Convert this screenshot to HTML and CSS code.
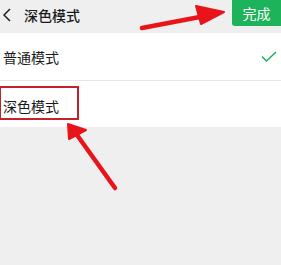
FILE: index.html
```html
<!DOCTYPE html>
<html lang="zh">
<head>
<meta charset="utf-8">
<link rel="stylesheet" href="styles.css">
</head>
<body>
<div class="page">
  <header class="header">
    <svg class="back" width="10" height="14" viewBox="0 0 10 14"><path d="M8 1 L2 7 L8 13" fill="none" stroke="#222" stroke-width="1.5"/></svg>
    <div class="title">深色模式</div>
    <div class="done">完成</div>
  </header>
  <div class="list">
    <div class="row row-first">
      <span class="label">普通模式</span>
      <svg class="check" width="16" height="12" viewBox="0 0 16 12"><path d="M1 5.5 L5.5 10 L15 1" fill="none" stroke="#1aad5a" stroke-width="1.4"/></svg>
    </div>
    <div class="row row-second">
      <span class="label">深色模式</span>
    </div>
  </div>
  <div class="mark-box"></div>
  <svg class="arrows" width="281" height="265" viewBox="0 0 281 265">
    <g fill="#e8141a" stroke="#e8141a" stroke-linecap="round" stroke-linejoin="round">
      <line x1="142" y1="28" x2="205" y2="16" stroke-width="4.5"/>
      <polygon points="224,12 196,6 201,24" stroke-width="2"/>
      <line x1="115" y1="188" x2="77" y2="135" stroke-width="4.5"/>
      <polygon points="68,124 69,139 86,130" stroke-width="2"/>
    </g>
  </svg>
</div>
</body>
</html>
```
FILE: styles.css
```css
html, body {
  margin: 0;
  padding: 0;
}
body {
  background: #efefef;
  font-family: "Noto Sans CJK SC", "Noto Sans", sans-serif;
  color: #1a1a1a;
}
.page {
  position: relative;
  width: 281px;
  height: 265px;
  overflow: hidden;
}
.header {
  display: flex;
  align-items: flex-start;
  height: 33px;
  background: #efefef;
}
.back {
  margin: 8px 0 0 2px;
}
.title {
  margin: 5px 0 0 12px;
  font-size: 14px;
  line-height: 20px;
  font-weight: 500;
}
.done {
  margin-left: auto;
  width: 49px;
  height: 26px;
  background: #1db35a;
  color: #fff;
  font-size: 14px;
  line-height: 26px;
  text-align: center;
  border-radius: 0 0 0 3px;
}
.list {
  background: #fff;
}
.row {
  display: flex;
  align-items: center;
  justify-content: space-between;
  padding: 0 4px 0 3px;
  font-size: 14px;
}
.row-first {
  height: 47px;
  border-bottom: 1px solid #e6e6e6;
}
.row-second {
  height: 46px;
  padding-top: 4px;
  box-sizing: border-box;
}
.mark-box {
  position: absolute;
  left: -1px;
  top: 86px;
  width: 76px;
  height: 30px;
  border: 2px solid #c2222b;
}
.arrows {
  position: absolute;
  left: 0;
  top: 0;
}
```
